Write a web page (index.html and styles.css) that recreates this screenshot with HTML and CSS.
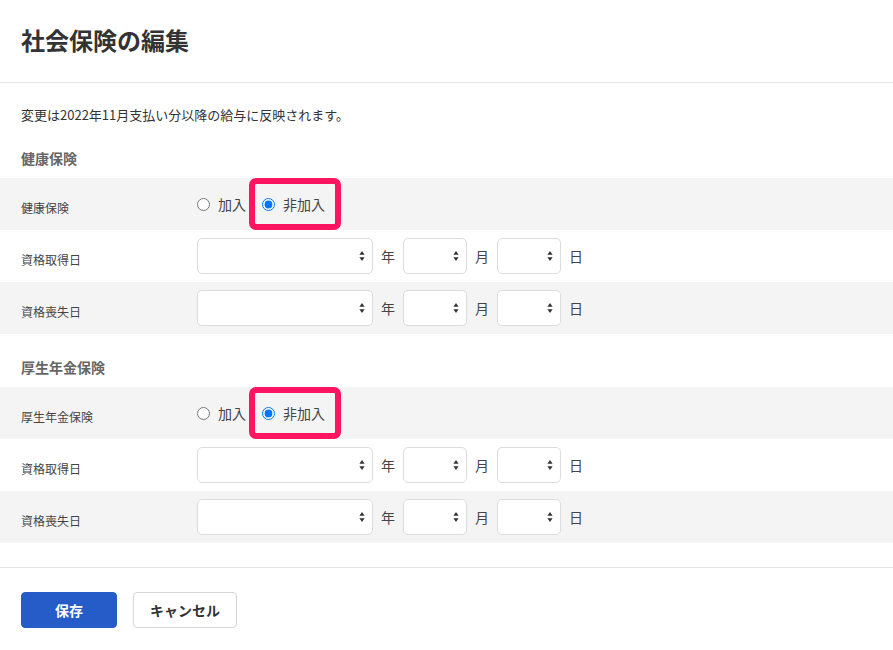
FILE: index.html
```html
<!DOCTYPE html>
<html lang="ja">
<head>
<meta charset="utf-8">
<title>社会保険の編集</title>
<link rel="stylesheet" href="styles.css">
</head>
<body>
<header class="page-header">
  <h1 class="page-title">社会保険の編集</h1>
</header>
<main class="content">
  <p class="note">変更は2022年11月支払い分以降の給与に反映されます。</p>

  <section class="section">
    <h3 class="section-title">健康保険</h3>
    <div class="row shaded">
      <div class="row-label">健康保険</div>
      <div class="radios">
        <label class="opt"><input type="radio" name="kenko"><span>加入</span></label>
        <label class="opt"><input type="radio" name="kenko" checked><span>非加入</span><span class="hl"></span></label>
      </div>
    </div>
    <div class="row">
      <div class="row-label">資格取得日</div>
      <div class="date">
        <span class="sel sel-y"><select></select><svg class="arr" width="6" height="10" viewBox="0 0 6 10"><path d="M3 0L5.6 3.8H0.4Z M3 10L5.6 6.2H0.4Z" fill="#333"/></svg></span><span class="unit">年</span>
        <span class="sel sel-s"><select></select><svg class="arr" width="6" height="10" viewBox="0 0 6 10"><path d="M3 0L5.6 3.8H0.4Z M3 10L5.6 6.2H0.4Z" fill="#333"/></svg></span><span class="unit">月</span>
        <span class="sel sel-s"><select></select><svg class="arr" width="6" height="10" viewBox="0 0 6 10"><path d="M3 0L5.6 3.8H0.4Z M3 10L5.6 6.2H0.4Z" fill="#333"/></svg></span><span class="unit">日</span>
      </div>
    </div>
    <div class="row shaded">
      <div class="row-label">資格喪失日</div>
      <div class="date">
        <span class="sel sel-y"><select></select><svg class="arr" width="6" height="10" viewBox="0 0 6 10"><path d="M3 0L5.6 3.8H0.4Z M3 10L5.6 6.2H0.4Z" fill="#333"/></svg></span><span class="unit">年</span>
        <span class="sel sel-s"><select></select><svg class="arr" width="6" height="10" viewBox="0 0 6 10"><path d="M3 0L5.6 3.8H0.4Z M3 10L5.6 6.2H0.4Z" fill="#333"/></svg></span><span class="unit">月</span>
        <span class="sel sel-s"><select></select><svg class="arr" width="6" height="10" viewBox="0 0 6 10"><path d="M3 0L5.6 3.8H0.4Z M3 10L5.6 6.2H0.4Z" fill="#333"/></svg></span><span class="unit">日</span>
      </div>
    </div>
  </section>

  <section class="section">
    <h3 class="section-title">厚生年金保険</h3>
    <div class="row shaded">
      <div class="row-label">厚生年金保険</div>
      <div class="radios">
        <label class="opt"><input type="radio" name="kosei"><span>加入</span></label>
        <label class="opt"><input type="radio" name="kosei" checked><span>非加入</span><span class="hl"></span></label>
      </div>
    </div>
    <div class="row">
      <div class="row-label">資格取得日</div>
      <div class="date">
        <span class="sel sel-y"><select></select><svg class="arr" width="6" height="10" viewBox="0 0 6 10"><path d="M3 0L5.6 3.8H0.4Z M3 10L5.6 6.2H0.4Z" fill="#333"/></svg></span><span class="unit">年</span>
        <span class="sel sel-s"><select></select><svg class="arr" width="6" height="10" viewBox="0 0 6 10"><path d="M3 0L5.6 3.8H0.4Z M3 10L5.6 6.2H0.4Z" fill="#333"/></svg></span><span class="unit">月</span>
        <span class="sel sel-s"><select></select><svg class="arr" width="6" height="10" viewBox="0 0 6 10"><path d="M3 0L5.6 3.8H0.4Z M3 10L5.6 6.2H0.4Z" fill="#333"/></svg></span><span class="unit">日</span>
      </div>
    </div>
    <div class="row shaded">
      <div class="row-label">資格喪失日</div>
      <div class="date">
        <span class="sel sel-y"><select></select><svg class="arr" width="6" height="10" viewBox="0 0 6 10"><path d="M3 0L5.6 3.8H0.4Z M3 10L5.6 6.2H0.4Z" fill="#333"/></svg></span><span class="unit">年</span>
        <span class="sel sel-s"><select></select><svg class="arr" width="6" height="10" viewBox="0 0 6 10"><path d="M3 0L5.6 3.8H0.4Z M3 10L5.6 6.2H0.4Z" fill="#333"/></svg></span><span class="unit">月</span>
        <span class="sel sel-s"><select></select><svg class="arr" width="6" height="10" viewBox="0 0 6 10"><path d="M3 0L5.6 3.8H0.4Z M3 10L5.6 6.2H0.4Z" fill="#333"/></svg></span><span class="unit">日</span>
      </div>
    </div>
  </section>
</main>
<footer class="page-footer">
  <button class="btn btn-primary" type="button">保存</button>
  <button class="btn btn-default" type="button">キャンセル</button>
</footer>
</body>
</html>
```

FILE: styles.css
```css
* { box-sizing: border-box; }

html, body {
  margin: 0;
  padding: 0;
  background: #fff;
  color: #333;
  font-family: "Noto Sans CJK JP", "Noto Sans", "Liberation Sans", sans-serif;
}

.page-header {
  height: 83px;
  padding: 24px 21px 0;
  border-bottom: 1px solid #e4e4e4;
}

.page-title {
  margin: 0;
  font-size: 24px;
  line-height: 32px;
  font-weight: 700;
  color: #333;
}

.content {
  padding: 22px 0 24px;
}

.note {
  margin: 0 21px;
  font-size: 13px;
  line-height: 20px;
  color: #333;
}

.section {
  margin-top: 23px;
}

.section-title {
  margin: 0 21px 10px;
  font-size: 14px;
  line-height: 20px;
  font-weight: 700;
  color: #666;
}

.row {
  display: flex;
  align-items: center;
  height: 52px;
  padding-left: 21px;
}

.row.shaded {
  background: #f5f4f5;
}

.row-label {
  width: 176px;
  flex: none;
  padding-top: 7px;
  font-size: 12px;
  line-height: 16px;
  color: #444;
}

.radios {
  display: flex;
  align-items: center;
  gap: 16px;
}

.opt {
  position: relative;
  display: flex;
  align-items: center;
  font-size: 14px;
  line-height: 20px;
  color: #444;
}

.opt input {
  width: 13px;
  height: 13px;
  margin: 0 8px 0 0;
}

.hl {
  position: absolute;
  left: -13px;
  top: -16px;
  width: 92px;
  height: 52px;
  border: 6px solid #ff1461;
  border-radius: 7px;
  pointer-events: none;
}

.date {
  display: flex;
  align-items: center;
}

.sel {
  position: relative;
  display: inline-block;
  height: 36px;
}

.sel select {
  appearance: none;
  -webkit-appearance: none;
  width: 100%;
  height: 36px;
  border: 1px solid #dcdcdc;
  border-radius: 5px;
  background: #fff;
  display: block;
}

.sel .arr {
  position: absolute;
  right: 8px;
  top: 13px;
  pointer-events: none;
}

.sel-y { width: 176px; }
.sel-s { width: 64px; }

.unit {
  margin: 0 8px;
  font-size: 14px;
  color: #444;
}

.page-footer {
  border-top: 1px solid #e4e4e4;
  padding: 24px 21px 22px;
  display: flex;
  gap: 16px;
}

.btn {
  height: 36px;
  border-radius: 4px;
  font-family: inherit;
  font-size: 14px;
  font-weight: 700;
  cursor: pointer;
}

.btn-primary {
  width: 96px;
  background: #265cc8;
  border: 1px solid #265cc8;
  color: #fff;
}

.btn-default {
  width: 104px;
  background: #fff;
  border: 1px solid #d6d6d6;
  color: #333;
}
```
